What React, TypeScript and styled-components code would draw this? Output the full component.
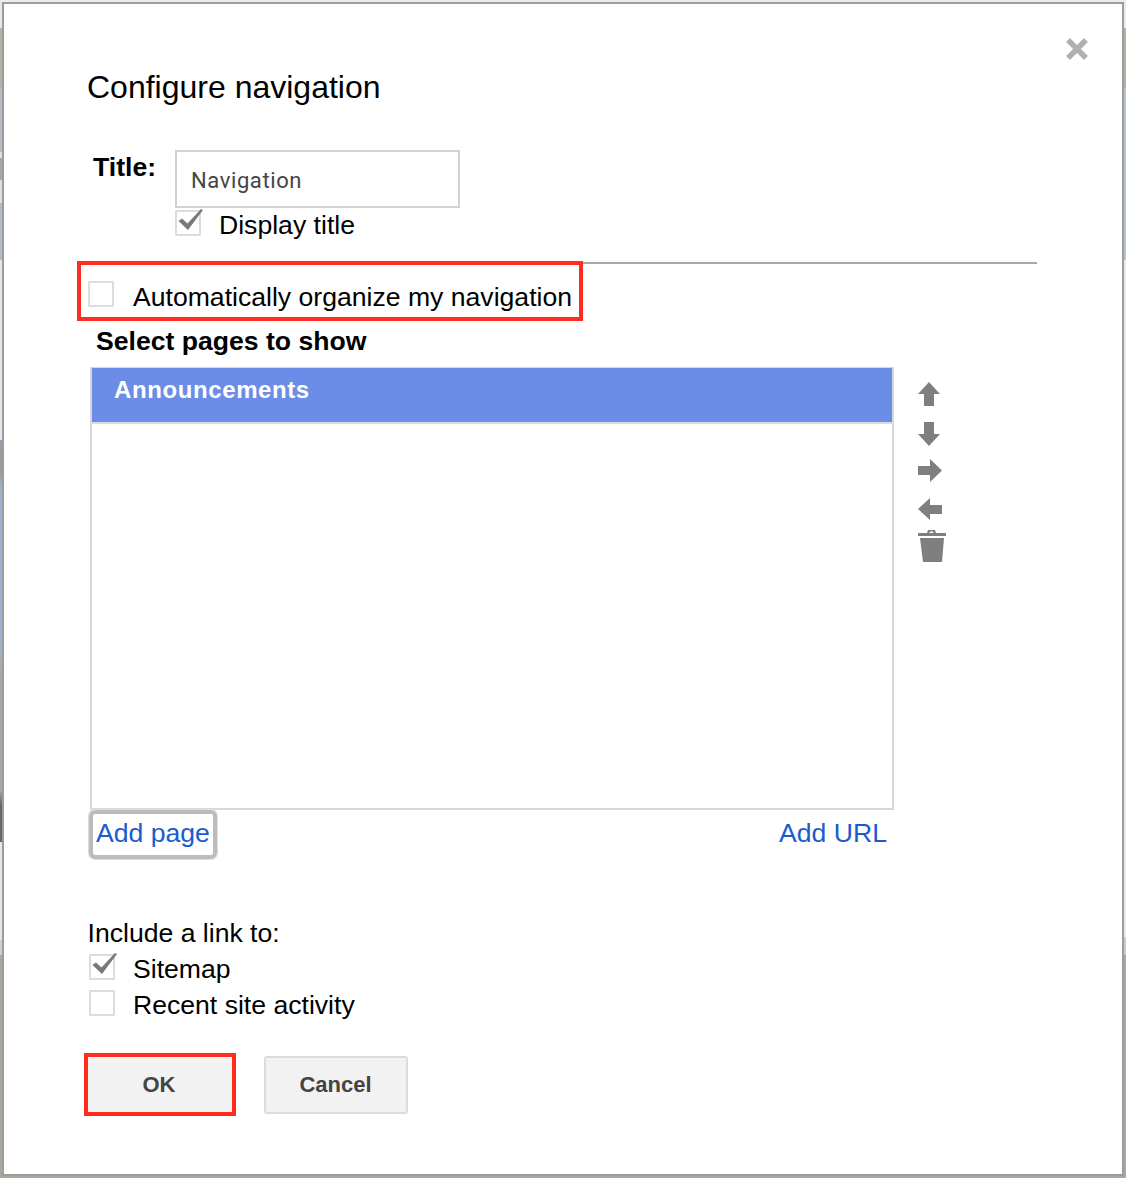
import React from 'react';
import styled, { createGlobalStyle } from 'styled-components';

const GlobalStyle = createGlobalStyle`
  html, body {
    margin: 0;
    padding: 0;
    background: #ececec;
  }
  * {
    box-sizing: border-box;
  }
`;

const Backdrop = styled.div`
  width: 1126px;
  height: 1178px;
  padding: 2px;
  background-color: #ececec;
  background-repeat: no-repeat;
  background-size: 2px 100%, 2px 100%, 100% 2px;
  background-position: left top, right top, left bottom;
  background-image:
    linear-gradient(to bottom, #e8e8e8 0, #e8e8e8 28px, #b8b2a4 28px, #b8b2a4 88px, #b5bec8 88px, #b5bec8 152px, #e0e0e0 152px, #e0e0e0 158px, #a0a8b0 158px, #a0a8b0 180px, #dedede 180px, #dedede 203px, #b0bcc8 203px, #b0bcc8 260px, #e6e6e6 260px, #e6e6e6 440px, #8ea0bc 440px, #a09c88 470px, #9fb3d0 490px, #9fb3d0 640px, #a8a8a0 680px, #a8a8a0 790px, #666 805px, #666 842px, #e6e6e6 842px, #e6e6e6 940px, #c8d0d8 940px, #c8d0d8 955px, #aaa89a 955px, #aaa89a 1178px),
    linear-gradient(to bottom, #ececec 0, #ececec 28px, #b8b2a4 28px, #b8b2a4 88px, #b5c3d0 88px, #b5c3d0 260px, #eaeaea 260px, #eaeaea 937px, #c0ccd8 937px, #c0ccd8 955px, #aaa89a 955px, #aaa89a 1178px),
    linear-gradient(to right, #aaa89a, #aaa89a);
  font-family: "Liberation Sans", Arial, sans-serif;
  font-size: 26.6px;
  color: #000;
`;

const Dialog = styled.div`
  position: relative;
  height: 100%;
  border: 2px solid #9c9c9c;
  background: #fff;
  padding: 61px 85px 0 83px;
`;

const CloseIcon = styled.svg`
  position: absolute;
  top: 33px;
  right: 33px;
  width: 24px;
  height: 24px;
  fill: none;
  stroke: #b0b0b0;
  stroke-width: 5.5;
  filter: blur(0.5px);
`;

const Heading = styled.h1`
  margin: 0;
  font-size: 32px;
  line-height: 44px;
  font-weight: 400;
`;

const TitleRow = styled.div`
  display: flex;
  margin: 41px 0 0 6px;
`;

const TitleLabel = styled.label`
  width: 82px;
  padding-top: 1px;
  line-height: 32px;
  font-weight: 700;
`;

const TitleFields = styled.div`
  display: flex;
  flex-direction: column;
`;

const TitleInput = styled.div`
  width: 285px;
  height: 58px;
  padding: 16px 0 0 14px;
  border: 2px solid #d2d2d2;
  font-family: Roboto, sans-serif;
  font-size: 22px;
  line-height: 26px;
  letter-spacing: 0.6px;
  color: #444;
`;

const CheckRow = styled.div<{ $mt?: number }>`
  display: flex;
  align-items: center;
  height: 36px;
  margin-top: ${(p) => p.$mt ?? 0}px;
`;

const Box = styled.span<{ $raised?: boolean }>`
  position: relative;
  flex: none;
  width: 26px;
  height: 26px;
  margin: ${(p) => (p.$raised ? '-8px 19px 0 0' : '-4px 18px 0 0')};
  border: 2px solid #dcdcdc;
  border-radius: 1px;
`;

const CheckMark = styled.svg`
  position: absolute;
  left: -2px;
  top: -4px;
  width: 30px;
  height: 24px;
  fill: #787878;
  filter: blur(0.4px);
`;

const Rule = styled.hr`
  margin: 19px 0 0 0;
  border: 0;
  border-top: 2px solid #a8a8a8;
`;

const Highlight = styled.div`
  display: flex;
  width: fit-content;
  align-items: center;
  height: 60px;
  margin: -3px 0 0 -10px;
  padding: 13px 7px 0 7px;
  border: 4px solid #ff2d20;
`;

const SectionLabel = styled.div`
  margin: 2px 0 0 9px;
  line-height: 36px;
  font-weight: 700;
`;

const ListArea = styled.div`
  display: flex;
  margin: 8px 0 0 3px;
`;

const PageList = styled.div`
  width: 804px;
  height: 443px;
  border: 2px solid #d8d8d8;
`;

const PageItem = styled.div`
  height: 56px;
  margin-top: -1px;
  padding: 6px 0 0 22px;
  background: #6b8de8;
  border-bottom: 2px solid #dcdcdc;
  color: #fff;
  font-size: 24px;
  line-height: 32px;
  font-weight: 700;
  letter-spacing: 0.6px;
`;

const Tools = styled.div`
  display: flex;
  flex-direction: column;
  align-items: flex-start;
  padding: 15px 0 0 24px;
`;

const ToolIcon = styled.svg<{ $mt?: number }>`
  display: block;
  margin-top: ${(p) => p.$mt ?? 0}px;
  fill: #7f7f7f;
  filter: blur(0.4px);
`;

const LinkRow = styled.div`
  display: flex;
  justify-content: space-between;
  width: 803px;
  margin: 0 0 0 4px;
`;

const FocusRing = styled.div`
  width: 128px;
  height: 49px;
  margin-left: -2px;
  padding: 2px 0 0 3px;
  border: 4px solid #bcbcbc;
  border-radius: 6px;
  box-shadow: 0 0 0 1px #dedede;
`;

const PageLink = styled.a<{ $right?: boolean }>`
  display: block;
  margin-right: ${(p) => (p.$right ? 7 : 0)}px;
  padding-top: ${(p) => (p.$right ? 6 : 0)}px;
  color: #1a5bd0;
  line-height: 34px;
`;

const IncludeLabel = styled.div`
  margin: 56px 0 0 0.5px;
  line-height: 36px;
`;

const LinkOptions = styled.div`
  margin-left: 2px;
`;

const Buttons = styled.div`
  display: flex;
  align-items: flex-start;
  margin: 30px 0 0 -3px;
`;

const OkFrame = styled.div`
  border: 4px solid #ff2d20;
  margin-right: 28px;
`;

const Button = styled.button<{ $framed?: boolean }>`
  display: block;
  width: 144px;
  height: ${(p) => (p.$framed ? 55 : 58)}px;
  margin-top: ${(p) => (p.$framed ? 0 : 3)}px;
  padding: ${(p) => (p.$framed ? '0 2px 0 0' : '0 1px 0 0')};
  border: ${(p) => (p.$framed ? 0 : '2px solid #dcdcdc')};
  border-radius: ${(p) => (p.$framed ? 0 : 3)}px;
  background: #f2f2f2;
  color: #444;
  font-family: "Liberation Sans", Arial, sans-serif;
  font-size: 22px;
  font-weight: 700;
`;

const Check = () => (
  <CheckMark viewBox="0 0 30 24">
    <path d="M3.500 13L7 10.500l5.500 5L26 1l2 1-15 20z" />
  </CheckMark>
);

export default function App() {
  return (
    <>
      <GlobalStyle />
      <Backdrop>
        <Dialog>
          <CloseIcon viewBox="0 0 24 24">
            <path d="M3 3l18 18M21 3L3 21" />
          </CloseIcon>
          <Heading>Configure navigation</Heading>
          <TitleRow>
            <TitleLabel>Title:</TitleLabel>
            <TitleFields>
              <TitleInput>Navigation</TitleInput>
              <CheckRow $mt={-1}>
                <Box><Check /></Box>
                Display title
              </CheckRow>
            </TitleFields>
          </TitleRow>
          <Rule />
          <Highlight>
            <Box $raised />
            Automatically organize my navigation
          </Highlight>
          <SectionLabel>Select pages to show</SectionLabel>
          <ListArea>
            <PageList>
              <PageItem>Announcements</PageItem>
            </PageList>
            <Tools>
              <ToolIcon width="22" height="24" viewBox="0 0 22 24">
                <path d="M11 0l11 12h-6v12H6V12H0z" />
              </ToolIcon>
              <ToolIcon $mt={16} width="22" height="24" viewBox="0 0 22 24">
                <path d="M11 24L0 12h6V0h10v12h6z" />
              </ToolIcon>
              <ToolIcon $mt={13} width="24" height="23" viewBox="0 0 24 23">
                <path d="M24 11.500L12 23v-7H0V7h12V0z" />
              </ToolIcon>
              <ToolIcon $mt={16} width="24" height="22" viewBox="0 0 24 22">
                <path d="M0 11L12 0v7h12v9H12v6z" />
              </ToolIcon>
              <ToolIcon $mt={10} width="28" height="32" viewBox="0 0 28 32">
                <path d="M10 0h7l1 3h10v3H0V3h9zM12 1.500l-.5 1.500h4l-.5-1.500zM2 8h24l-2 24H5z" />
              </ToolIcon>
            </Tools>
          </ListArea>
          <LinkRow>
            <FocusRing>
              <PageLink>Add page</PageLink>
            </FocusRing>
            <PageLink $right>Add URL</PageLink>
          </LinkRow>
          <IncludeLabel>Include a link to:</IncludeLabel>
          <LinkOptions>
            <CheckRow>
              <Box><Check /></Box>
              Sitemap
            </CheckRow>
            <CheckRow>
              <Box />
              Recent site activity
            </CheckRow>
          </LinkOptions>
          <Buttons>
            <OkFrame>
              <Button $framed>OK</Button>
            </OkFrame>
            <Button>Cancel</Button>
          </Buttons>
        </Dialog>
      </Backdrop>
    </>
  );
}
